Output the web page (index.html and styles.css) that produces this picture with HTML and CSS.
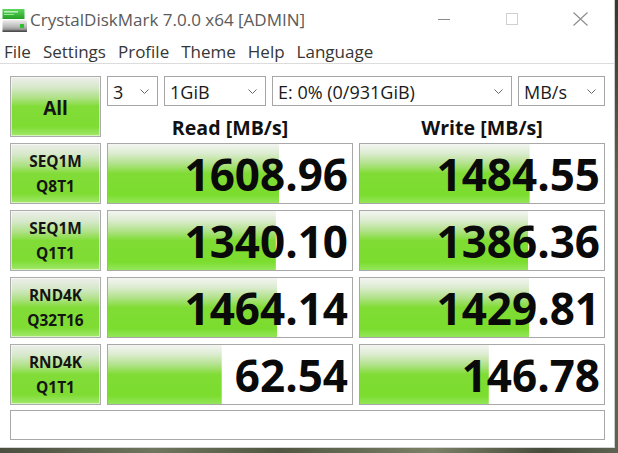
FILE: index.html
```html
<!DOCTYPE html>
<html lang="en">
<head>
<meta charset="utf-8">
<title>CrystalDiskMark 7.0.0 x64 [ADMIN]</title>
<link rel="stylesheet" href="styles.css">
</head>
<body>
<div class="desktop">
  <div class="window">
    <div class="titlebar">
      <svg class="appicon" width="26" height="26" viewBox="0 0 26 26">
        <defs>
          <linearGradient id="gTop" x1="0" y1="0" x2="0" y2="1">
            <stop offset="0" stop-color="#5fd65f"/>
            <stop offset="1" stop-color="#23a023"/>
          </linearGradient>
          <linearGradient id="gBody" x1="0" y1="0" x2="0" y2="1">
            <stop offset="0" stop-color="#eeeeee"/>
            <stop offset="0.6" stop-color="#b5b5b5"/>
            <stop offset="1" stop-color="#6a6a6a"/>
          </linearGradient>
        </defs>
        <rect x="0.5" y="2" width="22" height="10" fill="url(#gTop)"/>
        <rect x="2" y="4" width="14" height="1.6" fill="#b8f0b8"/>
        <rect x="2" y="7" width="10" height="1" fill="#9be89b"/>
        <rect x="0.5" y="13" width="24.5" height="12" rx="2" fill="url(#gBody)"/>
        <rect x="0.5" y="23.5" width="24.5" height="1.5" fill="#4d4d4d"/>
        <rect x="18" y="17" width="4" height="4" fill="#2fbf2f"/>
      </svg>
      <span class="title">CrystalDiskMark 7.0.0 x64 [ADMIN]</span>
      <div class="caption">
        <div class="cbtn">
          <svg width="12" height="12" viewBox="0 0 12 12"><line x1="0" y1="6.5" x2="12" y2="6.5" stroke="#8a8a8a" stroke-width="1"/></svg>
        </div>
        <div class="cbtn">
          <svg width="12" height="12" viewBox="0 0 12 12"><rect x="0.5" y="0.5" width="11" height="11" fill="none" stroke="#d0d0d0" stroke-width="1"/></svg>
        </div>
        <div class="cbtn">
          <svg width="15" height="14" viewBox="0 0 15 14"><path d="M0.5 0.5 L14.5 13.5 M14.5 0.5 L0.5 13.5" stroke="#8c8c8c" stroke-width="1.1" fill="none"/></svg>
        </div>
      </div>
    </div>
    <div class="menubar">
      <span class="mi">File</span>
      <span class="mi">Settings</span>
      <span class="mi">Profile</span>
      <span class="mi">Theme</span>
      <span class="mi">Help</span>
      <span class="mi">Language</span>
    </div>
    <div class="main">
      <div class="btn btn-all"><span>All</span></div>
      <div class="topright">
        <div class="selects">
          <div class="sel sel-count"><span class="sel-text">3</span><svg class="chev" width="9" height="5" viewBox="0 0 9 5"><polyline points="0.5,0.5 4.5,4.5 8.5,0.5" fill="none" stroke="#6a6a6a" stroke-width="1"/></svg></div>
          <div class="sel sel-size"><span class="sel-text">1GiB</span><svg class="chev" width="9" height="5" viewBox="0 0 9 5"><polyline points="0.5,0.5 4.5,4.5 8.5,0.5" fill="none" stroke="#6a6a6a" stroke-width="1"/></svg></div>
          <div class="sel sel-drive"><span class="sel-text">E: 0% (0/931GiB)</span><svg class="chev" width="9" height="5" viewBox="0 0 9 5"><polyline points="0.5,0.5 4.5,4.5 8.5,0.5" fill="none" stroke="#6a6a6a" stroke-width="1"/></svg></div>
          <div class="sel sel-unit"><span class="sel-text">MB/s</span><svg class="chev" width="9" height="5" viewBox="0 0 9 5"><polyline points="0.5,0.5 4.5,4.5 8.5,0.5" fill="none" stroke="#6a6a6a" stroke-width="1"/></svg></div>
        </div>
        <div class="heads">
          <div class="head">Read [MB/s]</div>
          <div class="head">Write [MB/s]</div>
        </div>
      </div>

      <div class="btn btn-label"><span>SEQ1M</span><span>Q8T1</span></div>
      <div class="cell" style="--w:70.11%">1608.96</div>
      <div class="cell" style="--w:69.53%">1484.55</div>

      <div class="btn btn-label"><span>SEQ1M</span><span>Q1T1</span></div>
      <div class="cell" style="--w:68.79%">1340.10</div>
      <div class="cell" style="--w:69.03%">1386.36</div>

      <div class="btn btn-label"><span>RND4K</span><span>Q32T16</span></div>
      <div class="cell" style="--w:69.43%">1464.14</div>
      <div class="cell" style="--w:69.26%">1429.81</div>

      <div class="btn btn-label"><span>RND4K</span><span>Q1T1</span></div>
      <div class="cell" style="--w:46.60%">62.54</div>
      <div class="cell" style="--w:52.78%">146.78</div>

      <div class="status"></div>
    </div>
  </div>
</div>
</body>
</html>
```
FILE: styles.css
```css
html, body {
  margin: 0;
  padding: 0;
}

body {
  width: 618px;
  height: 453px;
  overflow: hidden;
  font-family: "Open Sans", "Noto Sans", sans-serif;
}

.desktop {
  width: 618px;
  height: 453px;
  background:
    linear-gradient(180deg, rgba(20, 22, 16, 0.55) 0%, rgba(20, 22, 16, 0) 40%),
    linear-gradient(90deg, #4a4f3f 0%, #6f765d 25%, #505641 45%, #7a8166 70%, #474c3b 88%, #5d6350 100%);
}

.window {
  box-sizing: border-box;
  width: 615px;
  height: 448px;
  background: #ffffff;
  border-right: 1px solid #cdcdcd;
  border-bottom: 1px solid #d4d4d4;
}

/* ---------- title bar ---------- */
.titlebar {
  height: 38px;
  display: flex;
  align-items: center;
}

.appicon {
  margin-left: 2px;
  margin-top: 1px;
  flex: none;
}

.title {
  margin-left: 2px;
  font-size: 17px;
  color: #5a5a5a;
  white-space: nowrap;
}

.caption {
  margin-left: auto;
  display: flex;
  height: 38px;
}

.cbtn {
  width: 68px;
  height: 38px;
  display: flex;
  align-items: center;
  justify-content: center;
}

/* ---------- menu ---------- */
.menubar {
  box-sizing: border-box;
  height: 26px;
  display: flex;
  align-items: center;
  gap: 12px;
  padding: 1px 0 0 4px;
  border-bottom: 1px solid #dcdcdc;
  font-size: 17px;
  color: #363636;
}

.mi {
  white-space: nowrap;
}

/* ---------- main grid ---------- */
.main {
  display: grid;
  grid-template-columns: 91px 246px 246px;
  grid-template-rows: 61px 61px 61px 61px 61px 30px;
  column-gap: 6px;
  row-gap: 6px;
  padding: 12px 0 0 10px;
}

.btn {
  box-sizing: border-box;
  border: 1px solid #acacac;
  box-shadow: inset 0 0 0 1px rgba(255, 255, 255, 0.55);
  background: linear-gradient(180deg,
    #eceeea 0%,
    #d6e8ca 18%,
    #aee184 36%,
    #82dc38 50%,
    #7edc32 84%,
    #a2e86c 100%);
  display: flex;
  flex-direction: column;
  align-items: center;
  justify-content: center;
  font-weight: 700;
  color: #141414;
}

.btn-all {
  font-size: 19px;
  padding-top: 3px;
}

.btn-label {
  font-size: 15.4px;
  line-height: 25px;
}

.topright {
  grid-column: 2 / 4;
  display: flex;
  flex-direction: column;
}

.selects {
  display: flex;
  gap: 6px;
  height: 30px;
}

.sel {
  box-sizing: border-box;
  height: 30px;
  border: 1px solid #a6a6a6;
  background: #ffffff;
  display: flex;
  align-items: center;
  justify-content: space-between;
  padding: 0 8px 0 5px;
  font-size: 18px;
  color: #1a1a1a;
}

.sel-text {
  padding-top: 2px;
  white-space: nowrap;
}

.chev {
  flex: none;
}

.sel-count { width: 51px; }
.sel-size { width: 102px; }
.sel-drive { width: 240px; }
.sel-unit { width: 87px; }

.heads {
  flex: 1;
  display: grid;
  grid-template-columns: 246px 246px;
  column-gap: 6px;
  align-items: end;
}

.head {
  text-align: center;
  font-weight: 700;
  font-size: 19.6px;
  line-height: 19px;
  color: #111111;
  white-space: nowrap;
}

.cell {
  box-sizing: border-box;
  border: 1px solid #a8a8a8;
  background-color: #ffffff;
  background-image: linear-gradient(180deg,
    #f4f5f2 0%,
    #dcecd0 16%,
    #b0e288 34%,
    #80dc34 50%,
    #7bdd2e 86%,
    #94e65a 100%);
  background-size: var(--w) 100%;
  background-repeat: no-repeat;
  text-align: right;
  font-weight: 700;
  font-size: 44px;
  line-height: 57px;
  padding: 2px 4px 0 0;
  color: #0a0a0a;
  white-space: nowrap;
}

.status {
  grid-column: 1 / 4;
  box-sizing: border-box;
  height: 30px;
  margin-top: -1px;
  border: 1px solid #a8a8a8;
  background: #ffffff;
}
```
